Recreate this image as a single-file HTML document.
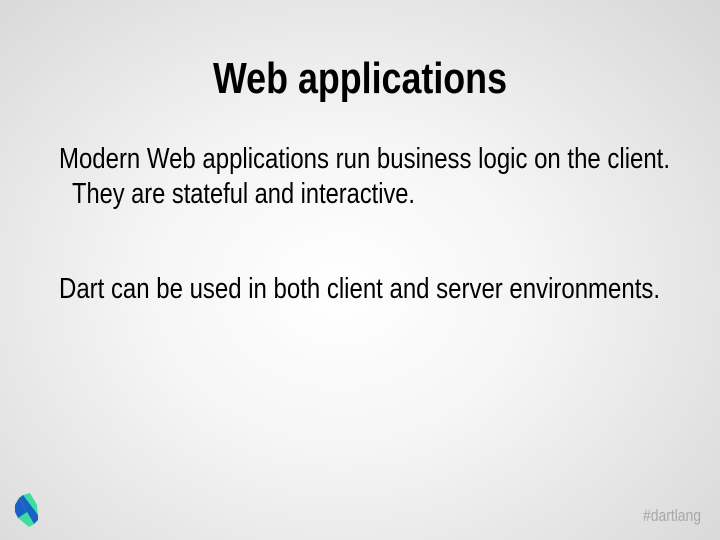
<!DOCTYPE html>
<html><head><style>
html,body{margin:0;padding:0}
body{width:720px;height:540px;overflow:hidden;background:radial-gradient(ellipse 560px 460px at 340px 290px,#ffffff 0%,#f5f5f5 35%,#d2d2d2 100%);}
svg{position:absolute;left:0;top:0}
text{font-family:"Liberation Sans",Arial,sans-serif}
</style></head><body>
<svg width="720" height="540" viewBox="0 0 720 540">
<text x="213" y="93" font-size="44" font-weight="bold" textLength="294" lengthAdjust="spacingAndGlyphs" fill="#000">Web applications</text>
<text x="59" y="168" font-size="29" textLength="611" lengthAdjust="spacingAndGlyphs" fill="#000">Modern Web applications run business logic on the client.</text>
<text x="72" y="203" font-size="29" textLength="343" lengthAdjust="spacingAndGlyphs" fill="#000">They are stateful and interactive.</text>
<text x="59" y="298" font-size="29" textLength="601" lengthAdjust="spacingAndGlyphs" fill="#000">Dart can be used in both client and server environments.</text>
<text x="643" y="521" font-size="17" textLength="58" lengthAdjust="spacingAndGlyphs" fill="#a8a8a8">#dartlang</text>
<g>
<polygon points="23,495 30,493 37,505 38,520 31,526 25,522" fill="#3ddca0"/>
<polygon points="19,498 23,495 38,515 38,520 34,524" fill="#1b60c4"/>
<polygon points="15,505 19,498 34,524 29,527 18,518" fill="#3ddca0"/>
<polygon points="15,505 19,498 27,512 18,518 15,512" fill="#1b60c4"/>
</g>
</svg>
</body></html>
